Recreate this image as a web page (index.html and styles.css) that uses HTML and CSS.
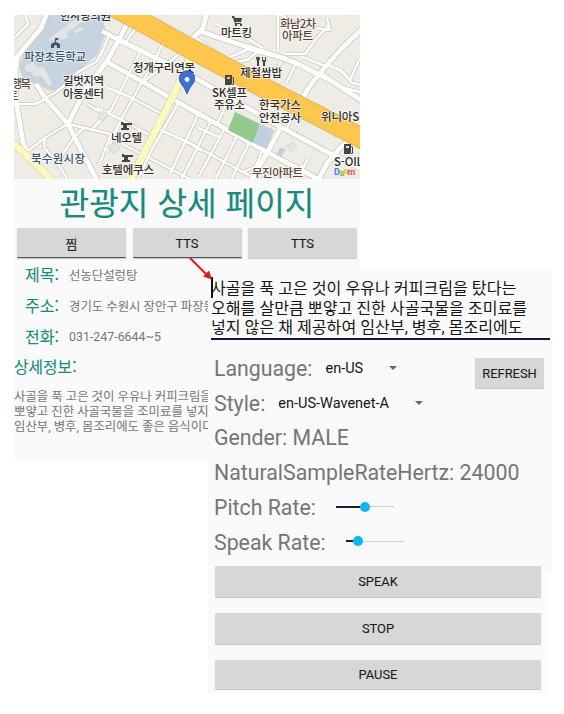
FILE: index.html
```html
<!DOCTYPE html>
<html lang="ko">
<head>
<meta charset="utf-8">
<title>관광지 상세 페이지</title>
<link rel="stylesheet" href="styles.css">
</head>
<body>
<main class="stage">
  <section class="detail">
    <svg class="map" viewBox="14 15 346 164" width="346" height="164">
      <defs>
        <g id="streets-wide">
          <path d="M47 13L41 28L20 53L14 61M17 58L15 80L16 100L23 143L27 152"/>
          <path d="M36 84L46 99L68 124L82 152L98 182"/>
          <path d="M68 124L84 92L107 61L120 38L134 10"/>
          <path d="M102 31L119 40L170 65M107 62L143 82L176 101L217 124L263 150L322 181"/>
          <path d="M190 75L230 98L281 127L325 151L360 168"/>
          <path d="M207 12L203 28L193 38M199 31L235 43L280 57L296 63L330 80L362 101"/>
          <path d="M362 29L344 46L325 67L309 87L299 105M281 127L268 151L251 181"/>
          <path d="M363 128L340 148L326 165L318 181"/>
        </g>
        <g id="streets">
          <path d="M14 38L28 24L24 12M118 38L109 35L102 52L96 62L78 72L66 84L55 93L43 99"/>
          <path d="M84 73L80 83L91 91M14 104L35 104L46 99M25 153L46 137L68 124M45 138L44 147L57 162L67 179"/>
          <path d="M68 124L111 134L126 146L163 165L190 179M84 128L74 137L57 163"/>
          <path d="M163 43L151 68L142 82L124 114L107 151M147 12L124 45M142 48L130 72L111 110L93 128"/>
          <path d="M143 82L178 55M106 87L132 98L160 113M97 108L122 120L151 136M178 104L152 149L138 179M121 122L111 137M99 165L111 134M87 104L100 112"/>
          <path d="M158 129L190 143L228 164L256 179M199 113L170 174M211 121L181 180M225 128L199 176M237 136L215 180M249 143L231 180M185 141L202 151M198 128L219 137"/>
          <path d="M217 124L232 93M196 38L225 59L249 49L257 48M215 24L237 32L263 48M259 51L247 60L224 64"/>
          <path d="M278 13L278 50M279 14L300 26L330 30L327 18M286 54L305 54L316 39L329 25M302 57L328 67M296 63L287 82M281 61L275 75M321 72L338 86L363 93M328 65L342 71L352 83L363 85M336 67L350 80L359 60"/>
          <path d="M287 128L307 88M280 58L245 49M303 111L300 119M302 165L297 179M262 151L256 166L244 172M286 162L304 176M256 165L269 181M308 158L302 171M339 126L333 137"/>
        </g>
      </defs>
      <rect x="14" y="15" width="346" height="164" class="land"/>
      <path class="campus" d="M44 13H102L106 33L98 54L81 69L69 80L65 89L51 91L41 86L23 79L19 67L24 51L43 29Z"/>
      <use href="#streets-wide" class="casing casing-wide"/>
      <use href="#streets" class="casing"/>
      <use href="#streets-wide" class="road road-wide"/>
      <use href="#streets" class="road"/>
      <g class="blocks">
        <path d="M48 39L69 23L82 15L86 19L67 34L69 37L62 41L59 37L50 42ZM24 66L32 62L39 67L44 66L53 84L49 87L41 76L34 77L31 72L25 72ZM72 31L81 26L85 30L76 34Z"/>
        <path d="M98 117L103 111L108 114L102 121ZM107 147L115 142L120 147L114 154ZM287 146L293 142L297 146L291 152Z"/>
      </g>
      <path class="park" d="M235 112L260 124L253 143L228 130Z"/>
      <path class="lot" d="M260 124L274 130L267 149L253 143ZM280 148L286 149L281 157L276 155Z"/>
      <path class="lane-edge" d="M192 54L172 98L129 183M12 142L38 166L53 182"/>
      <path class="lane" d="M192 54L172 98L129 183M12 142L38 166L53 182"/>
      <path class="highway-edge" d="M110 5L135 18L180 43L270 91L365 140"/>
      <path class="highway" d="M110 5L135 18L180 43L270 91L365 140"/>

      <g class="mark school">
        <path d="M55 38H58V40H56V42L60 44V48H57V46Q55.500 44 54 46V48H51V44L55 42Z"/>
      </g>
      <g class="mark">
        <path d="M121 122H123V123H132V125H127V128H129V130H121V128H123V125H121ZM122 154H124V155H133V157H128V160H130V162H122V160H124V157H122Z"/>
        <path d="M232 16H234L235 18H242L241 22H235L236 23H241V24H235L233 18H232ZM235 24H237V26H235ZM240 24H242V26H240Z"/>
        <path d="M256 58Q256 56 258 57Q260 56 260 59L259 61V66H257V61ZM262 57V61L263 62V66H265V62L266 61V57H265V60H264V57H264V60H263V57Z"/>
        <path fill-rule="evenodd" d="M225 75H232V84H233V79L232 77L234 78V84Q233 86 231 84V85H225ZM227 77V79H230V77ZM344 144H351V153H352V148L351 146L353 147V153Q352 155 350 153V154H344ZM346 146V148H349V146Z"/>
      </g>

      <g class="poi">
        <text x="60" y="20" textLength="51">한사랑의원</text>
        <text x="24" y="61" textLength="62" class="blue">파장초등학교</text>
        <text x="63" y="85" textLength="41">길벗지역</text>
        <text x="63" y="98" textLength="41">아동센터</text>
        <text x="12" y="88" textLength="19" class="brown">행복</text>
        <text x="8" y="100" class="brown">트</text>
        <text x="31" y="163" textLength="54" class="blue">북수원시장</text>
        <text x="111" y="142" textLength="31">네오텔</text>
        <text x="102" y="174" textLength="52">호텔에쿠스</text>
        <text x="133" y="72" textLength="62">청개구리연못</text>
        <text x="221" y="37" textLength="31">마트킹</text>
        <text x="280" y="28" textLength="36" class="brown">화남2차</text>
        <text x="282" y="40" textLength="31" class="brown">아파트</text>
        <text x="240" y="77" textLength="42">제철쌈밥</text>
        <text x="212" y="97" textLength="35">SK셀프</text>
        <text x="214" y="109" textLength="31">주유소</text>
        <text x="259" y="109" textLength="42">한국가스</text>
        <text x="259" y="122" textLength="42">안전공사</text>
        <text x="321" y="121" textLength="45">위니아SE</text>
        <text x="334" y="166" textLength="29">S-OIL</text>
        <text x="252" y="177" textLength="51" class="brown">무진아파트</text>
      </g>
      <g class="daum">
        <text x="334" y="174.500" class="d">D</text><text x="339.500" y="175.500" class="a">a</text><text x="344" y="174" class="u">u</text><text x="347.500" y="174.500" class="m">m</text>
      </g>
      <path class="pin" d="M187 94Q185 88 181 83.500A7.800 7.800 0 1 1 193 83.500Q189 88 187 94Z"/>
      <circle class="pin-hole" cx="187" cy="79.500" r="2.400"/>
    </svg>
    <h1 class="title">관광지 상세 페이지</h1>
    <div class="actions">
      <button class="btn pressed">찜</button>
      <button class="btn pressed">TTS</button>
      <button class="btn">TTS</button>
    </div>
    <dl class="facts">
      <div class="fact"><dt>제목:</dt><dd>선농단설렁탕</dd></div>
      <div class="fact"><dt>주소:</dt><dd>경기도 수원시 장안구 파장동</dd></div>
      <div class="fact"><dt>전화:</dt><dd>031-247-6644~5</dd></div>
    </dl>
    <h2 class="info-title">상세정보:</h2>
    <p class="info">사골을 푹 고은 것이 우유나 커피크림을<br>뽀얗고 진한 사골국물을 조미료를 넣지<br>임산부, 병후, 몸조리에도 좋은 음식이다</p>
  </section>

  <section class="speech">
    <div class="controls">
      <div class="editor">사골을 푹 고은 것이 우유나 커피크림을 탔다는<br>오해를 살만큼 뽀얗고 진한 사골국물을 조미료를<br>넣지 않은 채 제공하여 임산부, 병후, 몸조리에도</div>
      <div class="options">
        <div class="rows">
          <div class="row"><span>Language:</span><span class="select lang">en-US<i class="caret"></i></span></div>
          <div class="row"><span>Style:</span><span class="select style">en-US-Wavenet-A<i class="caret"></i></span></div>
          <div class="row">Gender: MALE</div>
          <div class="row">NaturalSampleRateHertz: 24000</div>
          <div class="row"><span>Pitch Rate:</span><span class="slider pitch"><i class="fill"></i><i class="thumb"></i><i class="rest"></i></span></div>
          <div class="row"><span>Speak Rate:</span><span class="slider speed"><i class="fill"></i><i class="thumb"></i><i class="rest"></i></span></div>
        </div>
        <button class="btn refresh">REFRESH</button>
      </div>
    </div>
    <div class="playback">
      <button class="btn">SPEAK</button>
      <button class="btn">STOP</button>
      <button class="btn pause">PAUSE</button>
    </div>
  </section>

  <svg class="arrow" width="26" height="26" viewBox="0 0 26 26">
    <path class="shaft" d="M2 2L18 18"/>
    <path class="head" d="M24 23.500L15 20.500L21 14.500Z"/>
  </svg>
</main>
</body>
</html>
```
FILE: styles.css
```css
* { box-sizing: border-box; }
body {
  margin: 0;
  background: #fff;
  font-family: Roboto, "Noto Sans CJK KR", sans-serif;
}
.stage {
  position: relative;
  display: flex;
  align-items: flex-start;
  width: 564px;
  height: 714px;
  overflow: hidden;
}

/* detail page */
.detail {
  width: 346px;
  height: 446px;
  margin: 15px 0 0 14px;
  background: #fafafa;
  display: flex;
  flex-direction: column;
  overflow: hidden;
}
.map { display: block; flex: none; }
.land { fill: #efece5; }
.campus { fill: #c7d3de; }
.casing { fill: none; stroke: #c9c6bf; stroke-width: 3.9; stroke-linejoin: round; }
.casing-wide { stroke-width: 6.2; }
.road { fill: none; stroke: #fff; stroke-width: 2.5; stroke-linejoin: round; }
.road-wide { stroke-width: 4.8; }
.blocks { fill: #e2e5e6; stroke: #c2c7ca; stroke-width: .6; }
.park { fill: #93c98b; }
.lot { fill: #c2cfdc; }
.lane, .lane-edge, .highway, .highway-edge { fill: none; }
.lane-edge { stroke: #d5d1ad; stroke-width: 8; }
.lane { stroke: #fdfac0; stroke-width: 6.8; }
.highway-edge { stroke: #d0a95a; stroke-width: 20.6; }
.highway { stroke: #fdc64c; stroke-width: 19.4; }
.mark { fill: #444; }
.school { fill: #3d566f; }
.poi text {
  font: 500 11.5px "Noto Sans CJK KR", sans-serif;
  fill: #2d2b29;
  stroke: #fff;
  stroke-opacity: .7;
  stroke-width: 1.6px;
  paint-order: stroke;
}
.poi .blue { fill: #36536c; }
.poi .brown { fill: #5c4739; }
.daum text { font: 700 9px Roboto, sans-serif; }
.d { fill: #3f7be8; }
.a { fill: #7fbd36; }
.u { fill: #f3b51e; }
.m { fill: #e9533f; }
.pin { fill: #416fd8; stroke: #2850ad; stroke-width: .8; }
.pin-hole { fill: #fff; }

.title {
  margin: 0;
  height: 49px;
  text-align: center;
  color: #168a7c;
  -webkit-text-stroke: .2px #168a7c;
  font: 400 32.2px/44px "Noto Sans CJK KR", sans-serif;
}
.btn {
  border: 0;
  border-radius: 1.5px;
  padding: 0;
  background: #d6d7d7;
  color: #1c1c1c;
  box-shadow: 0 1px 1px rgba(0, 0, 0, .22);
  -webkit-text-stroke: .1px #1c1c1c;
  font: 400 12.9px Roboto, "Noto Sans CJK KR", sans-serif;
}
.actions { display: flex; gap: 6.5px; padding: 0 3px; height: 30px; flex: none; }
.actions .btn { flex: 1; }
.actions .pressed { border-bottom: 1.5px solid #555; padding-top: 1px; }
.facts { margin: 1px 0 0; padding-left: 11px; }
.fact { display: flex; align-items: center; height: 31px; }
.fact dt {
  width: 44px;
  color: #168a7c;
  -webkit-text-stroke: .1px #168a7c;
  font: 400 16px "Noto Sans CJK KR", sans-serif;
  position: relative;
  top: -1px;
}
.fact dd {
  margin: 0;
  color: #757575;
  white-space: nowrap;
  font: 400 12.4px Roboto, "Noto Sans CJK KR", sans-serif;
}
.info-title {
  margin: 3px 0 0;
  color: #168a7c;
  -webkit-text-stroke: .1px #168a7c;
  font: 400 15.8px/24px "Noto Sans CJK KR", sans-serif;
}
.info { margin: 10px 0 0; white-space: nowrap; color: #757575; font-size: 12.4px; line-height: 15.2px; }

/* speech panel, laid over the detail page */
.speech { position: absolute; left: 208px; top: 271px; width: 344px; }
.controls { height: 301px; padding: 8px 2px 0 3px; background: #fafafa; }
.editor {
  height: 61px;
  border-bottom: 2px solid #0b1a36;
  color: #151515;
  font-size: 16.1px;
  line-height: 19.7px;
  white-space: nowrap;
}
.editor::before {
  content: "";
  position: absolute;
  left: 3px;
  top: 6px;
  width: 1.5px;
  height: 21px;
  background: #111;
}
.options { display: flex; justify-content: space-between; padding: 11px 7px 0 3px; }
.rows { width: 261px; flex: none; }
.row {
  display: flex;
  align-items: center;
  height: 34.8px;
  color: #757575;
  font-size: 21.3px;
  white-space: nowrap;
}
.select { display: flex; align-items: center; color: #151515; font-size: 14.5px; }
.lang, .style { margin-left: 13px; }
.caret {
  margin-left: 26px;
  border: 4.5px solid transparent;
  border-top-color: #666;
  border-bottom: 0;
}
.slider { display: flex; align-items: center; width: 58px; margin: -2px 0 0 20px; }
.fill { width: 24px; height: 2px; background: #142037; }
.speed .fill { width: 7px; }
.thumb { width: 10px; height: 10px; border-radius: 50%; background: #0ab6ee; }
.rest { flex: 1; height: 1.5px; background: #d3d3d3; }
.refresh { width: 69px; height: 30px; margin-top: 7px; flex: none; }
.playback {
  width: 339px;
  height: 121px;
  padding: 0 6px 0 7px;
  display: flex;
  flex-direction: column;
  gap: 16px;
  background: #fafafa;
}
.playback .btn { height: 31px; flex: none; }
.playback .btn:first-child { margin-top: -6px; }
.playback .pause { height: 29px; }
.arrow { position: absolute; left: 188px; top: 256px; }
.shaft { stroke: #e01818; stroke-width: 2; }
.head { fill: #e01818; }
```
